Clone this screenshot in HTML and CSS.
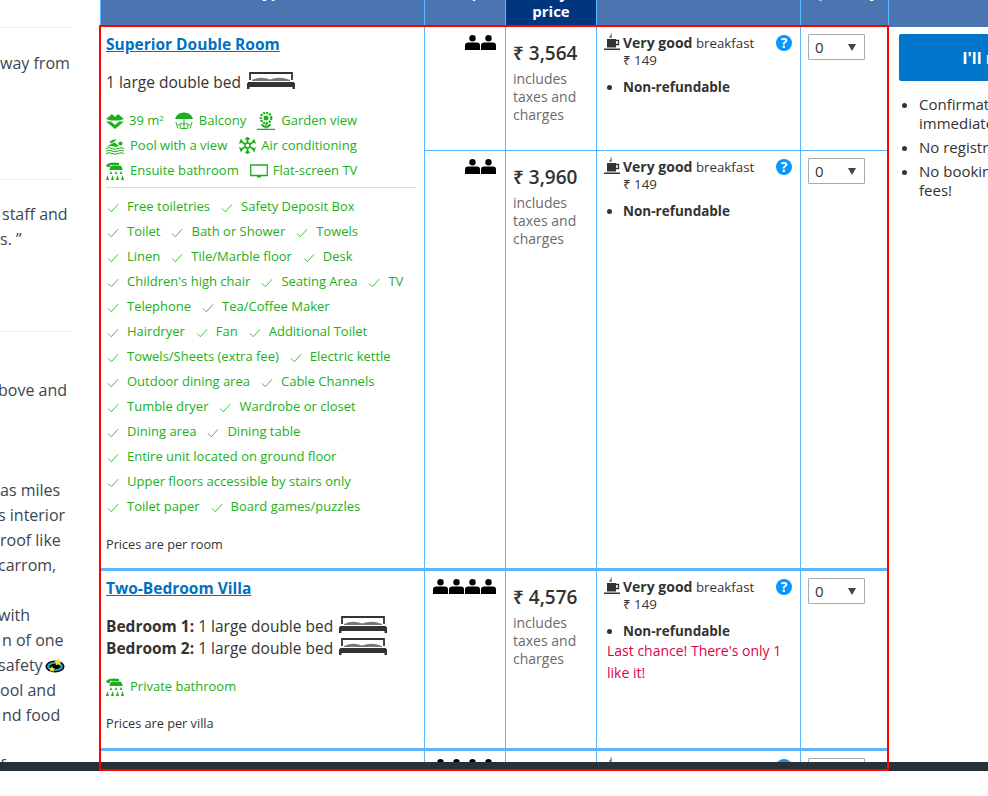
FILE: index.html
```html
<!DOCTYPE html>
<html lang="en">
<head>
  <meta charset="UTF-8" />
  <title>Room availability</title>
  <link rel="stylesheet" href="styles.css">
</head>
<body>

  <svg class="defs" width="0" height="0">
    <symbol id="i-check" viewBox="0 0 14 12"><path d="M1 6.500 5 10.500 13 1.500" fill="none" stroke="currentColor" stroke-width="1"/></symbol>
    <symbol id="i-person" viewBox="0 0 15 15"><circle cx="7.500" cy="3.200" r="3.200"/><path d="M0 15V10.500Q0 7.500 3 7.500H12Q15 7.500 15 10.500V15Z"/></symbol>
    <symbol id="i-cup" viewBox="0 0 16 18"><path d="M6 5Q4 3.500 6.500 2.500 6 1 7.500 0 8.500 2 7.500 3 8.500 4 7.500 5Z" fill="#777"/><path d="M3 6H12V14.500H3Z"/><path d="M12 7.500H14.500V11.500H12" fill="none" stroke="currentColor" stroke-width="1.300"/><path d="M0 15.500H16V17H0Z"/></symbol>
    <symbol id="i-bed" viewBox="0 0 48 17"><path d="M3 8V1H45V8" fill="none" stroke="currentColor" stroke-width="1.800"/><path d="M5 8Q14 4 23 7.500 33 4 43 8V9H5Z" fill="#777"/><path d="M1 10H47V14.500H1Z"/><path d="M0 11H48V15H0Z"/><path d="M0 14H2.500V17H0ZM45.500 14H48V17H45.500Z"/></symbol>
    <symbol id="i-area" viewBox="0 0 18 16"><path d="M0 6 6 1 9 4 12 1 18 6 13 7.500H5Z"/><path d="M0 8.500H5L9 12 13 8.500H18L9 16Z"/></symbol>
    <symbol id="i-balcony" viewBox="0 0 19 18"><path d="M0 7Q2 0 9.500 0 17 0 19 7Z"/><path d="M9.500 7V17M6 17H13M5 12H14M1 10 3 17M3 13H5.500V17M18 10 16 17M16 13H13.500V17" fill="none" stroke="currentColor" stroke-width="1"/></symbol>
    <symbol id="i-garden" viewBox="0 0 18 18"><circle cx="9" cy="6" r="2.500"/><circle cx="9" cy="6" r="5.200" fill="none" stroke="currentColor" stroke-width="2.400" stroke-dasharray="2 1"/><path d="M9 11V16.500M0 17.300H18" fill="none" stroke="currentColor" stroke-width="1.200"/><path d="M9 16Q4 15 4 12 8 12 9 16ZM9 16Q14 15 14 12 10 12 9 16Z"/></symbol>
    <symbol id="i-pool" viewBox="0 0 18 16"><circle cx="14.500" cy="5.500" r="2"/><path d="M2 8 9 3 10.500 1 6.500 2 3 4 5.500 5 1 9Q5 7 10 9L13 8 8.500 4.500Z"/><path d="M0 10.500Q3 9 6 10.500T12 10.500 18 10.500M0 13Q3 11.500 6 13T12 13 18 13M0 15.500Q3 14 6 15.500T12 15.500 18 15.500" fill="none" stroke="currentColor" stroke-width="1"/></symbol>
    <symbol id="i-snow" viewBox="0 0 17 17"><path d="M8.500 0V17M1 4 16 13M16 4 1 13" fill="none" stroke="currentColor" stroke-width="1.800"/><path d="M5.500 1 8.500 4 11.500 1ZM5.500 16 8.500 13 11.500 16ZM0 7 4 5 2 1.500ZM17 7 13 5 15 1.500ZM0 10 4 12 2 15.500ZM17 10 13 12 15 15.500Z"/><circle cx="8.500" cy="8.500" r="2.500" fill="#fff" stroke="currentColor" stroke-width="1.400"/></symbol>
    <symbol id="i-shower" viewBox="0 0 18 18"><path d="M0 3Q4-.5 13 1V3H4V5H1Z"/><path d="M7 3.500H13Q16.500 3.500 16.500 8H3.500Q3.500 3.500 7 3.500Z"/><path d="M5 9 6.300 12H3.700ZM10 9 11.300 12H8.700ZM15 9 16.300 12H13.700ZM1.500 13 3 18H0ZM6.500 13 8 18H5ZM11.500 13 13 18H10ZM16.500 13 18 18H15Z"/></symbol>
    <symbol id="i-tv" viewBox="0 0 18 14"><path d="M.7 1H17.300V11.500H.7Z" fill="none" stroke="currentColor" stroke-width="1.300"/><path d="M7 11.500H11V13.500H7Z"/></symbol>
  </svg>

  <div class="page">
    <aside class="side">
      <div class="rev rev-a">
        <p>way from</p>
      </div>
      <div class="rev rev-b">
        <p class="ind">staff and</p>
        <p>s. ”</p>
      </div>
      <div class="rev rev-c">
        <p class="cut">bove and</p>
        <p class="gap-4">as miles</p>
        <p class="cut">s interior</p>
        <p>roof like</p>
        <p class="cut">carrom,</p>
        <p class="gap-1 cut">with</p>
        <p class="ind">n of one</p>
        <p class="cut">safety<svg class="badge" width="20" height="16" viewBox="0 0 20 16"><ellipse cx="10" cy="8.500" rx="9.500" ry="6" fill="#000"/><ellipse cx="10" cy="8.500" rx="8" ry="4.500" fill="#2aa5d8"/><ellipse cx="10" cy="8.500" rx="5.500" ry="2.800" fill="#000"/><path d="M13 0 14.200 2.500 16.800 3 15 5 15.300 7.500 13 6.300 10.700 7.500 11 5 9.200 3 11.800 2.500Z" fill="#f7e11d"/><path d="M7 8 8 10 10 10.300 8.500 11.800 9 14 7 13 5 14 5.500 11.800 4 10.300 6 10Z" fill="#f7e11d"/></svg></p>
        <p>ool and</p>
        <p class="ind">nd food</p>
        <p class="gap-1">f</p>
      </div>
    </aside>

    <table class="rooms">
      <colgroup>
        <col class="c-room"><col class="c-sleeps"><col class="c-price"><col class="c-choice"><col class="c-qty"><col class="c-book">
      </colgroup>
      <thead>
        <tr>
          <th class="th-room">Accommodation Type</th>
          <th>Sleeps</th>
          <th class="th-price">Today's<br>price</th>
          <th>Your choices</th>
          <th>Quantity</th>
          <th></th>
        </tr>
      </thead>
      <tbody>
        <tr class="row-first">
          <td class="room" rowspan="2">
            <a class="room-name" href="#">Superior Double Room</a>
            <div class="beds">1 large double bed <svg class="bed"><use href="#i-bed"/></svg></div>
            <div class="facs">
              <div class="fac-row">
                <span class="fac"><svg class="ic ic-area"><use href="#i-area"/></svg>39 m<sup>2</sup></span>
                <span class="fac"><svg class="ic ic-big"><use href="#i-balcony"/></svg>Balcony</span>
                <span class="fac"><svg class="ic ic-big"><use href="#i-garden"/></svg>Garden view</span>
              </div>
              <div class="fac-row">
                <span class="fac"><svg class="ic ic-big"><use href="#i-pool"/></svg>Pool with a view</span>
                <span class="fac"><svg class="ic ic-snow"><use href="#i-snow"/></svg>Air conditioning</span>
              </div>
              <div class="fac-row">
                <span class="fac"><svg class="ic ic-big"><use href="#i-shower"/></svg>Ensuite bathroom</span>
                <span class="fac"><svg class="ic ic-tv"><use href="#i-tv"/></svg>Flat-screen TV</span>
              </div>
            </div>
            <div class="checks">
              <div class="chk-row"><span class="chk"><svg><use href="#i-check"/></svg>Free toiletries</span><span class="chk"><svg><use href="#i-check"/></svg>Safety Deposit Box</span></div>
              <div class="chk-row"><span class="chk"><svg><use href="#i-check"/></svg>Toilet</span><span class="chk"><svg><use href="#i-check"/></svg>Bath or Shower</span><span class="chk"><svg><use href="#i-check"/></svg>Towels</span></div>
              <div class="chk-row"><span class="chk"><svg><use href="#i-check"/></svg>Linen</span><span class="chk"><svg><use href="#i-check"/></svg>Tile/Marble floor</span><span class="chk"><svg><use href="#i-check"/></svg>Desk</span></div>
              <div class="chk-row"><span class="chk"><svg><use href="#i-check"/></svg>Children's high chair</span><span class="chk"><svg><use href="#i-check"/></svg>Seating Area</span><span class="chk"><svg><use href="#i-check"/></svg>TV</span></div>
              <div class="chk-row"><span class="chk"><svg><use href="#i-check"/></svg>Telephone</span><span class="chk"><svg><use href="#i-check"/></svg>Tea/Coffee Maker</span></div>
              <div class="chk-row"><span class="chk"><svg><use href="#i-check"/></svg>Hairdryer</span><span class="chk"><svg><use href="#i-check"/></svg>Fan</span><span class="chk"><svg><use href="#i-check"/></svg>Additional Toilet</span></div>
              <div class="chk-row"><span class="chk"><svg><use href="#i-check"/></svg>Towels/Sheets (extra fee)</span><span class="chk"><svg><use href="#i-check"/></svg>Electric kettle</span></div>
              <div class="chk-row"><span class="chk"><svg><use href="#i-check"/></svg>Outdoor dining area</span><span class="chk"><svg><use href="#i-check"/></svg>Cable Channels</span></div>
              <div class="chk-row"><span class="chk"><svg><use href="#i-check"/></svg>Tumble dryer</span><span class="chk"><svg><use href="#i-check"/></svg>Wardrobe or closet</span></div>
              <div class="chk-row"><span class="chk"><svg><use href="#i-check"/></svg>Dining area</span><span class="chk"><svg><use href="#i-check"/></svg>Dining table</span></div>
              <div class="chk-row"><span class="chk"><svg><use href="#i-check"/></svg>Entire unit located on ground floor</span></div>
              <div class="chk-row"><span class="chk"><svg><use href="#i-check"/></svg>Upper floors accessible by stairs only</span></div>
              <div class="chk-row"><span class="chk"><svg><use href="#i-check"/></svg>Toilet paper</span><span class="chk"><svg><use href="#i-check"/></svg>Board games/puzzles</span></div>
            </div>
            <div class="per">Prices are per room</div>
          </td>
          <td class="sleeps"><svg class="person"><use href="#i-person"/></svg><svg class="person"><use href="#i-person"/></svg></td>
          <td class="price"><div class="amount">₹ 3,564</div><div class="taxes">includes<br>taxes and<br>charges</div></td>
          <td class="choice">
            <div class="meal"><svg class="cup"><use href="#i-cup"/></svg><div><b>Very good</b> breakfast<br>₹ 149</div><span class="help">?</span></div>
            <ul class="terms"><li>Non-refundable</li></ul>
          </td>
          <td class="qty"><div class="qty-box"><select><option>0</option></select></div></td>
          <td class="book" rowspan="2">
            <button class="reserve" type="button">I'll reserve</button>
            <ul class="perks">
              <li>Confirmation is<br>immediate</li>
              <li>No registration required</li>
              <li>No booking or credit card<br>fees!</li>
            </ul>
          </td>
        </tr>
        <tr class="row-second">
          <td class="sleeps"><svg class="person"><use href="#i-person"/></svg><svg class="person"><use href="#i-person"/></svg></td>
          <td class="price"><div class="amount">₹ 3,960</div><div class="taxes">includes<br>taxes and<br>charges</div></td>
          <td class="choice">
            <div class="meal"><svg class="cup"><use href="#i-cup"/></svg><div><b>Very good</b> breakfast<br>₹ 149</div><span class="help">?</span></div>
            <ul class="terms"><li>Non-refundable</li></ul>
          </td>
          <td class="qty"><div class="qty-box"><select><option>0</option></select></div></td>
        </tr>
        <tr class="row-villa">
          <td class="room">
            <a class="room-name" href="#">Two-Bedroom Villa</a>
            <div class="bedrooms">
              <div><b>Bedroom 1:</b> 1 large double bed <svg class="bed"><use href="#i-bed"/></svg></div>
              <div><b>Bedroom 2:</b> 1 large double bed <svg class="bed"><use href="#i-bed"/></svg></div>
            </div>
            <div class="fac-row fac-single"><span class="fac"><svg class="ic ic-big"><use href="#i-shower"/></svg>Private bathroom</span></div>
            <div class="per per-villa">Prices are per villa</div>
          </td>
          <td class="sleeps"><svg class="person"><use href="#i-person"/></svg><svg class="person"><use href="#i-person"/></svg><svg class="person"><use href="#i-person"/></svg><svg class="person"><use href="#i-person"/></svg></td>
          <td class="price"><div class="amount">₹ 4,576</div><div class="taxes">includes<br>taxes and<br>charges</div></td>
          <td class="choice">
            <div class="meal"><svg class="cup"><use href="#i-cup"/></svg><div><b>Very good</b> breakfast<br>₹ 149</div><span class="help">?</span></div>
            <ul class="terms"><li>Non-refundable</li></ul>
            <div class="urgent">Last chance! There's only 1<br>like it!</div>
          </td>
          <td class="qty"><div class="qty-box"><select><option>0</option></select></div></td>
          <td class="book"></td>
        </tr>
        <tr class="row-next">
          <td class="room"></td>
          <td class="sleeps"><svg class="person"><use href="#i-person"/></svg><svg class="person"><use href="#i-person"/></svg><svg class="person"><use href="#i-person"/></svg><svg class="person"><use href="#i-person"/></svg></td>
          <td class="price"></td>
          <td class="choice">
            <div class="meal"><svg class="cup"><use href="#i-cup"/></svg><div></div><span class="help">?</span></div>
          </td>
          <td class="qty"><div class="qty-box"><select><option>0</option></select></div></td>
          <td class="book"></td>
        </tr>
      </tbody>
    </table>

    <div class="footer-bar"></div>
    <div class="highlight"></div>
  </div>

</body>
</html>
```

FILE: styles.css
```css
body {
  margin: 0;
  background: #fff;
  color: #333;
  font-family: "Open Sans", "Noto Sans", sans-serif;
  font-size: 14px;
}
.defs {
  position: absolute;
}
.page {
  position: relative;
  display: flex;
  height: 771px;
  overflow: hidden;
}

/* left column, cut off by the scroll */
.side {
  flex: 0 0 72px;
  margin-right: 28px;
  overflow: hidden;
  font-size: 16px;
  line-height: 25px;
  white-space: nowrap;
  color: #3b4652;
}
.side p {
  margin: 0;
}
.side .cut {
  margin-left: -2px;
}
.side .ind {
  margin-left: 2px;
}
.rev {
  border-top: 1px solid #eee;
}
.rev-a {
  height: 128px;
  margin-top: 27px;
  padding-top: 23px;
}
.rev-b {
  height: 129px;
  padding-top: 22px;
}
.rev-c {
  padding-top: 46px;
}
.side .gap-4 {
  margin-top: 75px;
}
.side .gap-1 {
  margin-top: 25px;
}
.badge {
  margin-left: 2px;
  vertical-align: -3px;
}

/* table */
.rooms {
  flex: none;
  width: 1010px;
  height: 0;
  margin-top: -30px;
  table-layout: fixed;
  border-collapse: separate;
  border-spacing: 0;
  border-left: 1px solid #5cb5ff;
}
.c-room { width: 324px; }
.c-sleeps { width: 81px; }
.c-price { width: 91px; }
.c-choice { width: 204px; }
.c-qty { width: 88px; }
.c-book { width: 222px; }
th {
  height: 57px;
  box-sizing: border-box;
  padding: 0 4px 26px;
  background: #4b75b0;
  border-right: 1px solid #5cb5ff;
  color: #fff;
  font-size: 15px;
  line-height: 18px;
  text-align: center;
  vertical-align: bottom;
}
.th-room {
  padding-left: 26px;
  text-align: left;
  white-space: nowrap;
}
.th-price {
  padding-bottom: 7px;
  background: #003580;
}
td {
  box-sizing: border-box;
  padding: 0;
  vertical-align: top;
  border-right: 1px solid #5cb5ff;
  border-bottom: 1px solid #5cb5ff;
}
td.book {
  border-right: 0;
  border-bottom: 0;
}
.row-first td { height: 124px; }
.row-second td { height: 420px; }
.row-second td, .row-villa td, .room {
  border-bottom-width: 3px;
}
.row-first .sleeps, .row-first .price, .row-first .choice, .row-first .qty {
  border-bottom-width: 1px;
}
.row-villa td { height: 180px; }
.row-next td { height: 180px; border-bottom: 0; }
.row-first .room { height: 544px; }

.room {
  padding: 5px;
}
.room-name {
  display: block;
  color: #0071c2;
  font-size: 15.5px;
  font-weight: bold;
  line-height: 24px;
}
.beds {
  margin-top: 14px;
  font-size: 15.5px;
  line-height: 24px;
}
.bed {
  width: 48px;
  height: 17px;
  margin-left: 2px;
  vertical-align: -1px;
  color: #333;
  fill: #333;
}
.facs {
  margin: 14px 3px 0 0;
  padding-bottom: 4px;
  border-bottom: 1px solid #ddd;
}
.fac-row {
  display: flex;
  gap: 11px;
  height: 25px;
  line-height: 25px;
  font-size: 13px;
  color: #1bb01b;
  white-space: nowrap;
}
.fac {
  display: flex;
  align-items: center;
}
.fac sup {
  font-size: 8px;
  line-height: 0;
  margin-top: -5px;
}
.ic {
  margin-right: 5px;
  fill: currentColor;
}
.ic-area { width: 18px; height: 16px; }
.ic-big { width: 18px; height: 18px; margin-right: 6px; }
.ic-snow { width: 17px; height: 17px; margin-left: 1px; }
.ic-tv { width: 18px; height: 14px; }
.checks {
  margin-top: 6px;
}
.chk-row {
  display: flex;
  gap: 10px;
  height: 25px;
  line-height: 25px;
  font-size: 13px;
  color: #1bb01b;
  white-space: nowrap;
}
.chk {
  display: flex;
  align-items: center;
}
.chk svg {
  width: 12px;
  height: 10px;
  margin: 3px 8px 0 1px;
}
.per {
  margin-top: 15px;
  font-size: 12.7px;
  line-height: 20px;
}
.bedrooms {
  margin-top: 15px;
  font-size: 15.5px;
  line-height: 22px;
}
.fac-single {
  margin-top: 15px;
}
.per-villa {
  margin-top: 14px;
}

.sleeps {
  padding: 8px 9px 0 0;
  text-align: right;
}
.person {
  width: 15px;
  height: 15px;
  margin-left: 1px;
  fill: #000;
}
.price {
  padding: 14px 7px 0 8px;
}
.amount {
  margin-left: -1px;
  font-size: 19px;
  font-weight: 600;
  line-height: 24px;
}
.taxes {
  margin: 5px 0 0 -1px;
  font-size: 14px;
  line-height: 18px;
  color: #6b6b6b;
}
.choice {
  padding: 7px 7px 0 7px;
}
.meal {
  position: relative;
  display: flex;
  gap: 3px;
  font-size: 13.3px;
  line-height: 17px;
}
.meal b {
  font-size: 14px;
}
.cup {
  flex: none;
  width: 16px;
  height: 18px;
  margin-top: -1px;
  fill: #333;
  color: #333;
}
.help {
  position: absolute;
  top: 1px;
  right: 1px;
  width: 16px;
  height: 16px;
  border-radius: 50%;
  background: #0896ff;
  color: #fff;
  font-size: 14px;
  font-weight: bold;
  line-height: 16px;
  text-align: center;
}
.terms {
  margin: 9px 0 0;
  padding: 0 0 0 19px;
  font-size: 13.5px;
  font-weight: bold;
  line-height: 18px;
}
.urgent {
  margin-left: 3px;
  font-size: 14px;
  line-height: 22px;
  color: #e0004d;
}
.qty {
  padding: 7px 0 0 7px;
}
.qty-box {
  position: relative;
  width: 57px;
}
.qty-box::after {
  content: "";
  position: absolute;
  top: 10px;
  right: 9px;
  border: 4px solid transparent;
  border-top: 7px solid #444;
  border-bottom: 0;
}
.qty-box select {
  width: 57px;
  height: 26px;
  padding: 0 6px;
  appearance: none;
  background: #fff;
  border: 1px solid #aaa;
  border-radius: 1px;
  color: #333;
  font-family: inherit;
  font-size: 15px;
}
.book {
  padding: 7px 0 0 10px;
}
.reserve {
  display: block;
  width: 210px;
  height: 47px;
  background: #0077cc;
  border: none;
  border-radius: 2px;
  color: #fff;
  font-family: inherit;
  font-size: 16px;
  font-weight: bold;
}
.perks {
  margin: 14px 0 0;
  padding: 0 0 0 20px;
  font-size: 15px;
  line-height: 19px;
}
.perks li {
  margin-bottom: 5px;
}

/* sticky bar and the red box laid over the shot */
.footer-bar {
  position: absolute;
  left: 0;
  right: 0;
  bottom: 0;
  height: 9px;
  background: #263238;
}
.highlight {
  position: absolute;
  left: 99px;
  top: 25px;
  width: 790px;
  height: 746px;
  box-sizing: border-box;
  border: 2px solid #f00;
}
```
